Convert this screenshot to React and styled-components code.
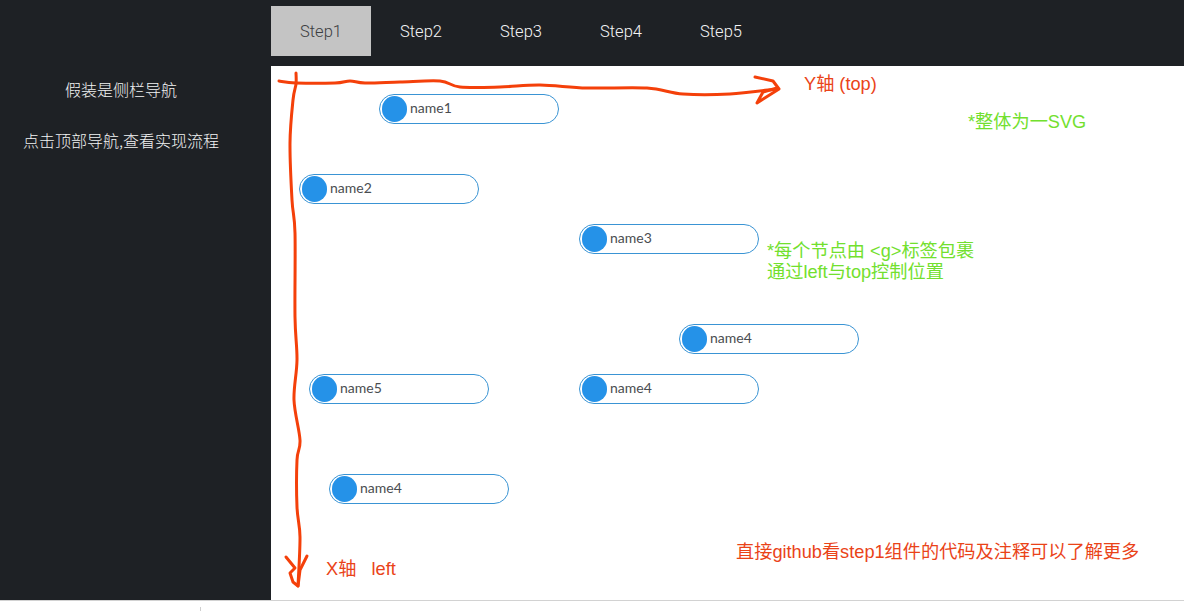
import React from "react";
import styled, { createGlobalStyle } from "styled-components";

const Global = createGlobalStyle`
  html, body { margin: 0; padding: 0; background: #fff; overflow: hidden; }
  body { font-family: "Noto Sans CJK SC", "Noto Sans", sans-serif; }
`;

const Page = styled.div`
  width: 1184px;
  height: 611px;
  display: flex;
  flex-direction: column;
`;
const Main = styled.div`
  height: 600px;
  display: flex;
`;
const Sidebar = styled.aside`
  width: 271px;
  flex: none;
  box-sizing: border-box;
  background: #1e2125;
  padding: 77px 29px 0 0;
  display: flex;
  flex-direction: column;
  gap: 27px;
`;
const SideLine = styled.p`
  margin: 0;
  height: 24px;
  line-height: 24px;
  text-align: center;
  font-size: 16px;
  font-weight: 300;
  color: #f2f3f3;
  white-space: nowrap;
`;
const Right = styled.div`
  flex: 1;
  display: flex;
  flex-direction: column;
`;
const TopNav = styled.nav`
  height: 66px;
  box-sizing: border-box;
  padding-top: 6px;
  background: #1e2125;
  display: flex;
  align-items: flex-start;
`;
const NavItem = styled.div`
  width: 100px;
  height: 50px;
  display: flex;
  align-items: center;
  justify-content: center;
  font-family: "Roboto", "Noto Sans", sans-serif;
  font-size: 16.5px;
  font-weight: 300;
  background: ${(p) => (p.$active ? "#c4c4c4" : "transparent")};
  color: ${(p) => (p.$active ? "#3c3e41" : "#f4f4f5")};
`;
const Canvas = styled.main`
  position: relative;
  flex: 1;
  background: #fff;
`;
const Node = styled.div`
  position: absolute;
  left: ${(p) => p.$x - 272}px;
  top: ${(p) => p.$y - 66}px;
  width: 180px;
  height: 30px;
  box-sizing: border-box;
  border: 1px solid #3a94d4;
  border-radius: 15px;
  display: flex;
  align-items: center;
  padding-left: 1.5px;
  gap: 3px;
`;
const Dot = styled.span`
  width: 25.5px;
  height: 25.5px;
  border-radius: 50%;
  background: #2592e8;
  flex: none;
`;
const NodeName = styled.span`
  font-family: "Lato", "Noto Sans", sans-serif;
  font-size: 14px;
  color: #4a4d50;
  line-height: 1;
  margin-top: -2px;
`;
const Note = styled.div`
  position: absolute;
  left: ${(p) => p.$x - 271}px;
  top: ${(p) => p.$y - 66}px;
  font-family: "Liberation Sans", "Noto Sans CJK SC", sans-serif;
  font-size: 18.2px;
  line-height: ${(p) => p.$lh || 22}px;
  color: ${(p) => (p.$green ? "#72e02e" : "#ea4318")};
  white-space: pre;
`;
const Drawing = styled.svg`
  position: absolute;
  inset: 0;
  width: 913px;
  height: 534px;
  pointer-events: none;
`;
const Footer = styled.footer`
  height: 11px;
  box-sizing: border-box;
  border-top: 1px solid #d2d2d2;
  padding: 6px 0 0 200px;
  background: #fff;
`;
const Tick = styled.div`
  width: 1px;
  height: 4px;
  background: #cfcfcf;
`;

const smooth = (pts) => {
  let d = `M${pts[0][0]} ${pts[0][1]}`;
  for (let i = 0; i < pts.length - 1; i++) {
    const p0 = pts[Math.max(i - 1, 0)];
    const p1 = pts[i];
    const p2 = pts[i + 1];
    const p3 = pts[Math.min(i + 2, pts.length - 1)];
    const c1 = [p1[0] + (p2[0] - p0[0]) / 6, p1[1] + (p2[1] - p0[1]) / 6];
    const c2 = [p2[0] - (p3[0] - p1[0]) / 6, p2[1] - (p3[1] - p1[1]) / 6];
    d += ` C${c1[0]} ${c1[1]} ${c2[0]} ${c2[1]} ${p2[0]} ${p2[1]}`;
  }
  return d;
};

const axisY = [[279, 81], [296, 83], [335, 83], [350, 81], [365, 83], [400, 82], [440, 81], [460, 87], [500, 87], [540, 85], [587, 88], [647, 88], [683, 94], [730, 94], [777, 89]];
const axisX = [[296, 73], [296, 84], [293, 100], [290, 143], [292, 200], [295, 233], [295, 317], [297, 360], [294, 400], [300, 440], [297, 460], [297, 507], [300, 537], [298, 586]];

const steps = ["Step1", "Step2", "Step3", "Step4", "Step5"];
const nodes = [
  { x: 380, y: 94, name: "name1" },
  { x: 300, y: 174, name: "name2" },
  { x: 580, y: 224, name: "name3" },
  { x: 680, y: 324, name: "name4" },
  { x: 310, y: 374, name: "name5" },
  { x: 580, y: 374, name: "name4" },
  { x: 330, y: 474, name: "name4" },
];

export default function App() {
  return (
    <Page>
      <Global />
      <Main>
        <Sidebar>
          <SideLine>假装是侧栏导航</SideLine>
          <SideLine>点击顶部导航,查看实现流程</SideLine>
        </Sidebar>
        <Right>
          <TopNav>
            {steps.map((s, i) => (
              <NavItem key={s} $active={i === 0}>{s}</NavItem>
            ))}
          </TopNav>
          <Canvas>
            {nodes.map((n, i) => (
              <Node key={i} $x={n.x} $y={n.y}>
                <Dot />
                <NodeName>{n.name}</NodeName>
              </Node>
            ))}
            <Note $x={804} $y={73}>Y轴 (top)</Note>
            <Note $x={968} $y={111} $green>*整体为一SVG</Note>
            <Note $x={767} $y={241} $green $lh={21}>{"*每个节点由 <g>标签包裹\n通过left与top控制位置"}</Note>
            <Note $x={326} $y={558}>X轴   left</Note>
            <Note $x={736} $y={541}>直接github看step1组件的代码及注释可以了解更多</Note>
            <Drawing viewBox="271 66 913 534" fill="none" stroke="#f4400a" strokeWidth="3" strokeLinecap="round" strokeLinejoin="round">
              <path d={smooth(axisY)} />
              <path d="M755 77 L773 81 L779 89 L757 103 L763 92 L777 88" />
              <path d={smooth(axisX)} />
              <path d="M286 557 L295 568 L290 573 L293 582 L298 586 L300 570 L307 556" />
            </Drawing>
          </Canvas>
        </Right>
      </Main>
      <Footer>
        <Tick />
      </Footer>
    </Page>
  );
}
